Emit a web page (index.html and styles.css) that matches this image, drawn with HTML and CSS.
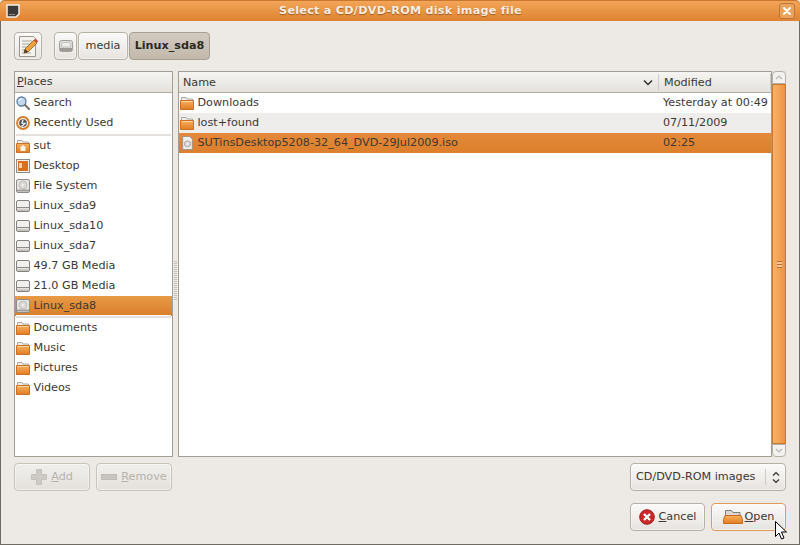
FILE: index.html
```html
<!DOCTYPE html>
<html lang="en">
<head>
<meta charset="utf-8">
<title>Select a CD/DVD-ROM disk image file</title>
<link rel="stylesheet" href="styles.css">
</head>
<body>
<svg class="defs" width="0" height="0" aria-hidden="true">
  <defs>
    <linearGradient id="fg" x1="0" y1="0" x2="0" y2="1"><stop offset="0" stop-color="#f8b060"/><stop offset="1" stop-color="#e07c24"/></linearGradient>
    <linearGradient id="dg" x1="0" y1="0" x2="0" y2="1"><stop offset="0" stop-color="#f4f3f1"/><stop offset="1" stop-color="#b9b6b1"/></linearGradient>
    <symbol id="folder" viewBox="0 0 14 14">
      <path d="M1.500 4V1.500h4.500l1 1.500h5.500v3h-11z" fill="#f1eeea" stroke="#9a958f" stroke-width=".8"/>
      <path d="M.5 4.500h13v9H.5z" fill="url(#fg)" stroke="#cc6f22"/>
      <path d="M1.500 5.500h11" stroke="#fbd2a0"/>
    </symbol>
    <symbol id="home" viewBox="0 0 14 14">
      <path d="M1.500 4V1.500h4.500l1 1.500h5.500v3h-11z" fill="#f1eeea" stroke="#9a958f" stroke-width=".8"/>
      <path d="M.5 4.500h13v9H.5z" fill="url(#fg)" stroke="#cc6f22"/>
      <path d="M7 6l3.500 3H9.500v3h-5V9H3.500z" fill="#fff3e6"/>
    </symbol>
    <symbol id="drive" viewBox="0 0 14 14">
      <rect x=".5" y="1.500" width="13" height="11" rx="1.500" fill="#f1f0ee" stroke="#85827d"/>
      <rect x="1" y="8.500" width="12" height="3.500" fill="url(#dg)"/>
      <path d="M1 8.500h12" stroke="#8f8c87"/>
    </symbol>
    <symbol id="hd" viewBox="0 0 14 14">
      <rect x=".5" y="1.500" width="13" height="11" rx="2" fill="#dddbd8" stroke="#a3a09b"/>
      <path d="M2.500 8V5.500a2 2 0 0 1 2-2h5a2 2 0 0 1 2 2V8z" fill="#eeedeb" stroke="#bdbab6" stroke-width=".8"/>
      <rect x="1" y="9" width="12" height="3" fill="#9d9a95"/>
    </symbol>
    <symbol id="fs" viewBox="0 0 14 14">
      <rect x=".5" y=".5" width="13" height="13" rx="1.500" fill="#e8e6e3" stroke="#8f8c87"/>
      <circle cx="7" cy="6" r="4" fill="#dcdad7" stroke="#bfbcb8"/>
      <circle cx="7" cy="6" r="1" fill="#f4f3f1"/>
      <path d="M1 11.500h12" stroke="#a09d98" stroke-width="2"/>
    </symbol>
    <symbol id="search" viewBox="0 0 14 14">
      <circle cx="5.500" cy="5.500" r="4.500" fill="#c3d6ec" stroke="#5b7fa8" stroke-width="1.300"/>
      <path d="M3 5a3 3 0 0 1 3-2.200" stroke="#fff" fill="none"/>
      <path d="M9 9l4 4" stroke="#77736d" stroke-width="2.200" stroke-linecap="round"/>
    </symbol>
    <symbol id="recent" viewBox="0 0 14 14">
      <circle cx="7" cy="7" r="6" fill="#ecedeb" stroke="#dd7b26" stroke-width="1.800"/>
      <circle cx="7" cy="7" r="3.800" fill="#555"/>
      <path d="M7 3.800L6 7l3 .5L5.500 10.500" stroke="#fff" stroke-width="1.200" fill="none"/>
    </symbol>
    <symbol id="desktop" viewBox="0 0 14 14">
      <rect x=".5" y=".5" width="13" height="13" fill="#f3f2f0" stroke="#8f8c87"/>
      <rect x="2" y="2" width="10" height="10" fill="#d9701c"/>
      <rect x="3" y="4" width="3" height="5" fill="#f7d3ab"/>
    </symbol>
    <symbol id="iso" viewBox="0 0 12 16">
      <path d="M.5.5h8l3 3v12H.5z" fill="#f1f0ee" stroke="#94908a"/>
      <circle cx="6" cy="9" r="3.500" fill="#d9d8d5" stroke="#a3a09b"/>
      <circle cx="6" cy="9" r="1" fill="#fff"/>
    </symbol>
  </defs>
</svg>

<main class="window">
  <header class="titlebar">
    <svg class="menu-icon" width="14" height="14" viewBox="0 0 14 14"><path d="M1 1h12v9l-3 3H1z" fill="#3c3b39" stroke="#f1efec" stroke-width="1.500"/><path d="M3 10.500h6" stroke="#8d8b87"/></svg>
    <h1 class="title">Select a CD/DVD-ROM disk image file</h1>
    <button class="close" aria-label="Close"><svg width="10" height="10" viewBox="0 0 10 10"><path d="M2 2l6 6M8 2l-6 6" stroke="#fff" stroke-width="2" stroke-linecap="round"/></svg></button>
  </header>

  <div class="content">
    <nav class="pathbar">
      <button class="btn edit">
        <svg width="24" height="24" viewBox="0 0 24 24">
          <path d="M3.500 2.500h14l2 2v18h-16z" fill="#f5f3ee" stroke="#9a968f"/>
          <path d="M6 7h10M6 10h10M6 13h7M6 16h5M6 19h9" stroke="#a7a49e"/>
          <path d="M8 19l1-4 9-9 3 3-9 9z" fill="#eda23c" stroke="#8a5a1c" stroke-width=".8"/>
          <path d="M18 6l1.500-1.500 2.500 2.500L21 9z" fill="#d8413a"/>
          <path d="M8 19l1-4 3 3z" fill="#3a3632"/>
        </svg>
      </button>
      <div class="crumbs">
        <button class="btn crumb-icon"><svg width="14" height="14"><use href="#hd"/></svg></button>
        <button class="btn crumb">media</button>
        <button class="btn crumb active">Linux_sda8</button>
      </div>
    </nav>

    <section class="panes">
      <aside class="places">
        <div class="col-head places-head"><span><u>P</u>laces</span></div>
        <ul class="list">
          <li class="row"><svg class="ic"><use href="#search"/></svg>Search</li>
          <li class="row"><svg class="ic"><use href="#recent"/></svg>Recently Used</li>
          <li class="sep"></li>
          <li class="row"><svg class="ic"><use href="#home"/></svg>sut</li>
          <li class="row"><svg class="ic"><use href="#desktop"/></svg>Desktop</li>
          <li class="row"><svg class="ic"><use href="#fs"/></svg>File System</li>
          <li class="row"><svg class="ic"><use href="#drive"/></svg>Linux_sda9</li>
          <li class="row"><svg class="ic"><use href="#drive"/></svg>Linux_sda10</li>
          <li class="row"><svg class="ic"><use href="#drive"/></svg>Linux_sda7</li>
          <li class="row"><svg class="ic"><use href="#drive"/></svg>49.7 GB Media</li>
          <li class="row"><svg class="ic"><use href="#drive"/></svg>21.0 GB Media</li>
          <li class="row selected"><svg class="ic"><use href="#fs"/></svg>Linux_sda8</li>
          <li class="sep"></li>
          <li class="row"><svg class="ic"><use href="#folder"/></svg>Documents</li>
          <li class="row"><svg class="ic"><use href="#folder"/></svg>Music</li>
          <li class="row"><svg class="ic"><use href="#folder"/></svg>Pictures</li>
          <li class="row"><svg class="ic"><use href="#folder"/></svg>Videos</li>
        </ul>
      </aside>

      <div class="handle"></div>

      <div class="files">
        <div class="file-table">
          <div class="col-head file-head">
            <div class="h-name"><span>Name</span><svg width="10" height="7" viewBox="0 0 10 7"><path d="M1 1.500l4 4 4-4" fill="none" stroke="#33302c" stroke-width="1.500"/></svg></div>
            <div class="h-mod"><span>Modified</span></div>
            <div class="h-end"></div>
          </div>
          <ul class="list">
            <li class="frow"><span class="fname"><svg class="ic"><use href="#folder"/></svg>Downloads</span><span class="fdate">Yesterday at 00:49</span></li>
            <li class="frow alt"><span class="fname"><svg class="ic"><use href="#folder"/></svg>lost+found</span><span class="fdate">07/11/2009</span></li>
            <li class="frow selected"><span class="fname"><svg class="ic iso"><use href="#iso"/></svg>SUTinsDesktop5208-32_64_DVD-29Jul2009.iso</span><span class="fdate">02:25</span></li>
          </ul>
        </div>
        <div class="scrollbar">
          <div class="arrow up"><svg width="8" height="5" viewBox="0 0 8 5"><path d="M1 4l3-3 3 3" fill="none" stroke="#b8b4ae" stroke-width="1.200"/></svg></div>
          <div class="thumb"><i class="grip"></i></div>
          <div class="arrow down"><svg width="8" height="5" viewBox="0 0 8 5"><path d="M1 1l3 3 3-3" fill="none" stroke="#b8b4ae" stroke-width="1.200"/></svg></div>
        </div>
      </div>
    </section>

    <div class="filter-row">
      <div class="place-btns">
        <button class="btn dis add"><svg width="16" height="16" viewBox="0 0 16 16"><path d="M5.500 .5h5v5h5v5h-5v5h-5v-5h-5v-5h5z" fill="#cdcac5" stroke="#c4c1bc"/></svg><span><u>A</u>dd</span></button>
        <button class="btn dis remove"><svg width="16" height="6" viewBox="0 0 16 6"><rect x=".5" y=".5" width="15" height="5" fill="#c8c5c0" stroke="#bfbcb7"/></svg><span><u>R</u>emove</span></button>
      </div>
      <button class="btn combo"><span class="combo-label">CD/DVD-ROM images</span><span class="combo-arrows"><svg width="8" height="13" viewBox="0 0 8 13"><path d="M1 4.500l3-3 3 3M1 8.500l3 3 3-3" fill="none" stroke="#33302c" stroke-width="1.200"/></svg></span></button>
    </div>

    <div class="actions">
      <button class="btn action"><svg width="16" height="16" viewBox="0 0 16 16"><circle cx="8" cy="8" r="7.300" fill="#cc2a2a" stroke="#a01a1a"/><path d="M5 5l6 6M11 5l-6 6" stroke="#fff" stroke-width="2.300"/></svg><span><u>C</u>ancel</span></button>
      <button class="btn action default"><svg width="20" height="16" viewBox="0 0 20 16"><path d="M2.500 7V1.500h6l1.500 2h7V7z" fill="#d9d6d1" stroke="#807c76"/><path d="M2 6.500h16l1.500 4v4H.5v-4z" fill="url(#fg)" stroke="#c9691d"/></svg><span><u>O</u>pen</span></button>
    </div>
  </div>
</main>

<svg class="cursor" width="12" height="19" viewBox="0 0 12 19"><path d="M.5.5v15l3.500-3.500 2.500 6 2.500-1-2.500-6h5z" fill="#fff" stroke="#000"/></svg>
</body>
</html>
```

FILE: styles.css
```css
* { box-sizing: border-box; }
html, body { margin: 0; padding: 0; height: 100%; background: #edeae6; overflow: hidden; }
body { font: 11.2px/20px "DejaVu Sans", sans-serif; color: #3c3832; }
ul { list-style: none; margin: 0; padding: 0; }
button { font: inherit; color: inherit; margin: 0; padding: 0; }
u { text-underline-offset: 1px; }
.defs { position: absolute; }

.window { width: 800px; height: 545px; display: flex; flex-direction: column; background: #edeae6; border: 1px solid #6f6a62; border-top: 0; border-radius: 5px 5px 0 0; }
.titlebar { flex: none; height: 21px; margin: 0 -1px; padding: 0 5px 0 6px; display: flex; align-items: center; background: linear-gradient(#f3a558, #de8230); border-radius: 5px 5px 0 0; border-top: 1px solid #c9772d; }
.menu-icon { flex: none; }
.title { flex: 1; margin: 0; padding-left: 2px; text-align: center; font-size: 11.2px; font-weight: 700; letter-spacing: .26px; color: #fbeee0; text-shadow: 0 1px 1px #9a5a20; }
.close { flex: none; width: 16px; height: 16px; border: 1px solid #bd763a; border-radius: 3px; background: #eda25b; display: flex; align-items: center; justify-content: center; }

.content { flex: 1; min-height: 0; padding: 11px 13px 13px; display: flex; flex-direction: column; }
.btn { display: flex; align-items: center; justify-content: center; white-space: nowrap; background: linear-gradient(#fbfaf9, #e6e3df); border: 1px solid #b7b0a7; border-radius: 4px; box-shadow: inset 0 0 0 1px rgba(255,255,255,.45); }

.pathbar { flex: none; height: 28px; display: flex; gap: 12px; }
.edit { width: 28px; height: 28px; }
.crumbs { display: flex; gap: 1px; }
.crumb-icon { width: 23px; }
.crumb { width: 50px; }
.crumb.active { width: 81px; background: linear-gradient(#d3cbc1, #c2b8ab); border-color: #a89f93; font-weight: 700; color: #2c2924; box-shadow: none; }

.panes { flex: none; height: 386px; margin-top: 11px; display: flex; }
.places { flex: none; width: 159px; display: flex; flex-direction: column; background: #fff; border: 1px solid #a49d94; }
.handle { flex: none; width: 5px; position: relative; }
.handle::after { content: ""; position: absolute; left: 1px; top: 190px; height: 40px; width: 3px; background: repeating-linear-gradient(#c5c1bb 0 1px, transparent 1px 2px); }
.files { flex: 1; display: flex; min-width: 0; }
.file-table { flex: 1; min-width: 0; background: #fff; border: 1px solid #a49d94; }

.col-head { height: 21px; flex: none; background: linear-gradient(#f6f5f3, #e4e1dc); border-bottom: 1px solid #b3aca2; line-height: 20px; }
.places-head { padding-left: 2px; }
.file-head { display: flex; }
.h-name { width: 480px; padding: 1px 5px 0 4px; display: flex; align-items: center; justify-content: space-between; border-right: 1px solid #cfcbc5; margin: 2px 0; line-height: 16px; }
.h-mod { width: 112px; padding: 1px 5px 0; margin: 2px 0; line-height: 16px; border-right: 1px solid #cfcbc5; }
.h-end { flex: 1; }

.row { height: 19.96px; padding-left: 1px; display: flex; align-items: center; gap: 3.5px; }
.ic { width: 14px; height: 14px; flex: none; }
.sep { height: 3px; margin: 0 1px; background: #e4e1dc; border-top: 1px solid #fff; }
.row.selected { background: linear-gradient(#e99a45, #d97f2c); box-shadow: 0 1px 0 #c9772d; }
.frow { height: 20px; display: flex; align-items: center; }
.frow.alt { background: #eeedeb; }
.frow.selected { background: linear-gradient(#e4893a, #dc7f2c); }
.fname { width: 480px; padding-left: 1px; display: flex; align-items: center; gap: 3.5px; white-space: nowrap; }
.fdate { padding-left: 4px; white-space: nowrap; }
.iso { width: 11px; height: 14px; margin: 0 1px 0 2px; }

.scrollbar { flex: none; width: 14px; display: flex; flex-direction: column; background: #e4e1dc; }
.arrow { flex: none; height: 13px; border: 1px solid #b7b0a7; background: #f4f2f0; display: flex; align-items: center; justify-content: center; }
.arrow.up { border-radius: 4px 4px 0 0; }
.arrow.down { border-radius: 0 0 4px 4px; }
.thumb { flex: 1; background: linear-gradient(90deg, #f8b268, #ec9444); border: 1px solid #c9772d; display: flex; align-items: center; justify-content: center; }
.grip { display: block; width: 5px; height: 7px; background: repeating-linear-gradient(#b0703a 0 1px, #f7c38e 1px 3px); }

.filter-row { flex: none; height: 28px; margin-top: 6px; display: flex; justify-content: space-between; }
.place-btns { display: flex; gap: 6px; }
.dis { color: #b7b2ab; gap: 4px; background: linear-gradient(#f1efec, #e4e1dc); border-color: #c7c2ba; }
.add { width: 76px; }
.remove { width: 76px; }
.combo { width: 156px; justify-content: space-between; padding: 0 0 0 5px; }
.combo-arrows { height: 16px; width: 20px; border-left: 1px solid #cfcbc5; display: flex; align-items: center; justify-content: center; }

.actions { flex: none; height: 28px; margin-top: 12px; display: flex; justify-content: flex-end; gap: 6px; }
.action { width: 75px; gap: 4px; }
.default { border-color: #df9a58; gap: 2px; }

.cursor { position: absolute; left: 775px; top: 521px; }
```
